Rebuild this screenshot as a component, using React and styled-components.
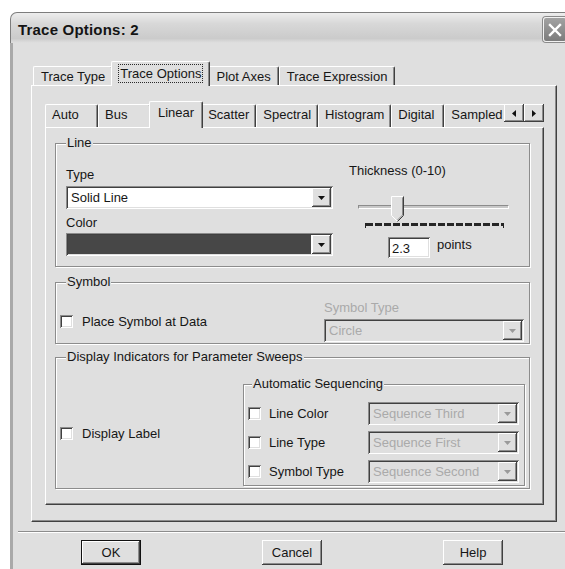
import React from 'react';
import styled, { createGlobalStyle, css } from 'styled-components';

const FACE = '#dfdfdf';
const SHADOW = '#8c8c8c';
const DARK = '#404040';
const TEXT = '#161616';
const GRAYTEXT = '#aaaaaa';

const GlobalStyle = createGlobalStyle`
  *, *::before, *::after { box-sizing: border-box; }
  html, body { margin: 0; padding: 0; background: #ffffff; overflow: hidden; }
  body {
    font-family: "Liberation Sans", Arial, sans-serif;
    font-size: 13px;
    line-height: 15px;
    color: ${TEXT};
  }
`;

const raised = css`
  box-shadow: inset -1px -1px ${DARK}, inset 1px 1px #ffffff,
    inset -2px -2px ${SHADOW}, inset 2px 2px ${FACE};
`;

const sunken = css`
  box-shadow: inset 1px 1px ${SHADOW}, inset -1px -1px #ffffff,
    inset 2px 2px ${DARK}, inset -2px -2px ${FACE};
`;

const Screen = styled.div`
  width: 565px;
  height: 569px;
  overflow: hidden;
  padding: 12px 0 0 10px;
`;

const Window = styled.div`
  width: 568px;
`;

const TitleBar = styled.div`
  display: flex;
  justify-content: space-between;
  align-items: flex-start;
  height: 31px;
  padding: 0 10px 0 7px;
  border: 1px solid #7d7d7d;
  border-bottom: 0;
  border-radius: 7px 7px 0 0;
  background: linear-gradient(#ededed 0%, #d8d8d8 35%, #cbcbcb 85%, #e0e0e0 100%);
`;

const Title = styled.span`
  margin-top: 8px;
  font-size: 15px;
  font-weight: bold;
  line-height: 17px;
  letter-spacing: 0.2px;
  color: #141414;
`;

const CloseButton = styled.span`
  display: flex;
  align-items: center;
  justify-content: center;
  width: 24px;
  height: 25px;
  margin-top: 4px;
  border: 1px solid #f2f2f2;
  border-radius: 3px;
  background: linear-gradient(#a2a2a2, #7c7c7c);
  box-shadow: 0 0 0 1px #8a8a8a;
`;

const Frame = styled.div`
  background: ${FACE};
  border-left: 3px solid #a9a9a9;
  border-right: 3px solid #a9a9a9;
  padding: 18px 5px 30px;
`;

const TabControl = styled.div`
  margin: ${p => p.$margin};
`;

const TabRow = styled.div`
  position: relative;
  z-index: 1;
  display: flex;
  height: ${p => p.$h}px;
`;

const TabList = styled.div`
  flex: 1;
  min-width: 0;
  display: flex;
  align-items: flex-end;
  align-self: flex-start;
  height: ${p => p.$h + 1}px;
  padding-left: ${p => p.$inset}px;
  overflow: hidden;
`;

const Tab = styled.div`
  position: relative;
  flex: none;
  display: flex;
  align-items: flex-start;
  min-width: ${p => p.$min}px;
  height: ${p => (p.$active ? p.$h + 1 : p.$tabH)}px;
  padding: ${p => (p.$active ? `${p.$activeTop}px 8px 0` : `${p.$top}px ${p.$padX}px 0`)};
  margin: ${p => (p.$active ? '0 -2px' : '0 0 1px')};
  z-index: ${p => (p.$active ? 1 : 0)};
  background: ${FACE};
  border-top: 1px solid #ffffff;
  border-left: 1px solid #ffffff;
  border-right: 1px solid ${DARK};
  border-radius: 2px 2px 0 0;
  box-shadow: inset -1px 0 ${SHADOW};
  white-space: nowrap;
`;

const FocusText = styled.span`
  outline: 1px dotted #2a2a2a;
  outline-offset: 1px;
`;

const ScrollPair = styled.div`
  flex: none;
  display: flex;
  margin-top: 3px;
`;

const ScrollButton = styled.span`
  display: flex;
  align-items: center;
  justify-content: center;
  width: 20px;
  height: 18px;
  background: ${FACE};
  ${raised};
`;

const Panel = styled.div`
  display: flex;
  flex-direction: column;
  padding: ${p => p.$pad};
  border-top: 1px solid #ffffff;
  border-left: 1px solid #ffffff;
  border-right: 1px solid ${DARK};
  border-bottom: 1px solid ${DARK};
  box-shadow: inset -1px -1px ${SHADOW};
`;

const Group = styled.div`
  position: relative;
  display: flex;
  align-items: ${p => p.$align || 'flex-start'};
  height: ${p => (p.$h ? `${p.$h}px` : 'auto')};
  width: ${p => (p.$w ? `${p.$w}px` : 'auto')};
  margin-top: ${p => p.$mt || 0}px;
  margin-left: ${p => (p.$push ? 'auto' : '0')};
  flex: none;
  padding: ${p => p.$pad};
  border: 1px solid ${SHADOW};
  box-shadow: inset 1px 1px #ffffff, 1px 1px #ffffff;
`;

const Caption = styled.span`
  position: absolute;
  top: -9px;
  left: ${p => p.$x || 10}px;
  padding: 0 1px;
  background: ${FACE};
  white-space: nowrap;
`;

const Column = styled.div`
  display: flex;
  flex-direction: column;
  width: ${p => (p.$w ? `${p.$w}px` : 'auto')};
  margin-left: ${p => p.$ml || 0};
  margin-top: ${p => p.$mt || 0}px;
`;

const FieldLabel = styled.span`
  margin-top: ${p => p.$mt || 0}px;
  color: ${p => (p.$disabled ? GRAYTEXT : TEXT)};
  white-space: nowrap;
`;

const Combo = styled.div`
  display: flex;
  align-items: stretch;
  width: ${p => (p.$w ? `${p.$w}px` : '100%')};
  height: 23px;
  margin-top: ${p => p.$mt || 0}px;
  padding: 2px;
  background: ${p => (p.$disabled ? FACE : '#ffffff')};
  ${sunken};
`;

const ComboText = styled.span`
  flex: 1;
  min-width: 0;
  padding: 2px 3px 0;
  color: ${p => (p.$disabled ? GRAYTEXT : TEXT)};
  white-space: nowrap;
  overflow: hidden;
`;

const Swatch = styled.span`
  flex: 1;
  margin-right: 1px;
  background: #474747;
`;

const DropButton = styled.span`
  flex: none;
  display: flex;
  align-items: center;
  justify-content: center;
  width: 19px;
  background: ${FACE};
  ${raised};
`;

const Slider = styled.div`
  position: relative;
  width: 151px;
  height: 32px;
  margin: 18px 0 0 9px;
`;

const Track = styled.div`
  margin-top: 9px;
  height: 4px;
  border-top: 1px solid ${SHADOW};
  border-left: 1px solid ${SHADOW};
  border-bottom: 1px solid #ffffff;
  border-right: 1px solid #ffffff;
  background: #c8c8c8;
`;

const Thumb = styled.svg`
  position: absolute;
  left: 33px;
  top: 0;
`;

const Ticks = styled.div`
  width: 139px;
  height: 5px;
  margin: 14px 0 0 7px;
  border-left: 1px solid #222;
  border-right: 1px solid #222;
  background: repeating-linear-gradient(90deg, #262626 0 7px, transparent 7px 9px) 0 0 / 100% 3px no-repeat;
`;

const EditRow = styled.div`
  display: flex;
  align-items: flex-start;
  gap: 7px;
  margin: 9px 0 0 39px;
`;

const EditBox = styled.span`
  width: 42px;
  height: 21px;
  padding: 4px 0 0 4px;
  background: #ffffff;
  ${sunken};
`;

const CheckLine = styled.div`
  display: flex;
  align-items: center;
  gap: 9px;
  margin: ${p => p.$m || 0};
`;

const CheckBox = styled.span`
  flex: none;
  width: 13px;
  height: 13px;
  background: #ffffff;
  ${sunken};
`;

const SeqGrid = styled.div`
  display: grid;
  grid-template-columns: 13px 91px 151px;
  column-gap: 8px;
  row-gap: 6px;
  align-items: center;
`;

const Separator = styled.div`
  height: 2px;
  margin-top: 9px;
  border-top: 1px solid ${SHADOW};
  border-bottom: 1px solid #ffffff;
`;

const ButtonRow = styled.div`
  display: flex;
  gap: 121px;
  margin-top: 7px;
  padding-left: 63px;
`;

const PushButton = styled.button`
  width: 60px;
  height: 25px;
  padding: 0;
  border: 0;
  font: inherit;
  color: ${TEXT};
  background: ${FACE};
  ${raised};
  ${p =>
    p.$default &&
    css`
      box-shadow: inset 0 0 0 1px #111111, inset -2px -2px ${DARK}, inset 2px 2px #ffffff,
        inset -3px -3px ${SHADOW};
    `}
`;

const DownArrow = ({ color = '#111' }) => (
  <svg width="7" height="4" viewBox="0 0 7 4">
    <polygon points="0,0 7,0 3.5,4" fill={color} />
  </svg>
);

const SideArrow = ({ dir }) => (
  <svg width="4" height="7" viewBox="0 0 4 7">
    <polygon points={dir === 'left' ? '4,0 4,7 0,3.5' : '0,0 0,7 4,3.5'} fill="#111" />
  </svg>
);

const ComboBox = ({ value, swatch, disabled, w, mt }) => (
  <Combo $disabled={disabled} $w={w} $mt={mt}>
    {swatch ? <Swatch /> : <ComboText $disabled={disabled}>{value}</ComboText>}
    <DropButton>
      <DownArrow color={disabled ? '#9a9a9a' : '#111'} />
    </DropButton>
  </Combo>
);

const OUTER = { h: 24, tabH: 19, top: 2, activeTop: 4, padX: 7 };
const INNER = { h: 26, tabH: 23, top: 2, activeTop: 3, padX: 6 };

const TabStrip = ({ tabs, active, size, inset, focus, children }) => (
  <TabRow $h={size.h}>
    <TabList $h={size.h} $inset={inset}>
      {tabs.map(t => (
        <Tab
          key={t}
          $active={t === active}
          $h={size.h}
          $tabH={size.tabH}
          $top={size.top}
          $activeTop={size.activeTop}
          $padX={size.padX}
          $min={53}
        >
          {t === active && focus ? <FocusText>{t}</FocusText> : t}
        </Tab>
      ))}
    </TabList>
    {children}
  </TabRow>
);

const outerTabs = ['Trace Type', 'Trace Options', 'Plot Axes', 'Trace Expression'];
const innerTabs = ['Auto', 'Bus', 'Linear', 'Scatter', 'Spectral', 'Histogram', 'Digital', 'Sampled'];

const sequencing = [
  { label: 'Line Color', value: 'Sequence Third' },
  { label: 'Line Type', value: 'Sequence First' },
  { label: 'Symbol Type', value: 'Sequence Second' },
];

export default function App() {
  return (
    <Screen>
      <GlobalStyle />
      <Window>
        <TitleBar>
          <Title>Trace Options: 2</Title>
          <CloseButton>
            <svg width="14" height="14" viewBox="0 0 14 14">
              <path d="M2 2 L12 12 M12 2 L2 12" stroke="#ffffff" strokeWidth="2.4" strokeLinecap="square" />
            </svg>
          </CloseButton>
        </TitleBar>

        <Frame>
          <TabControl $margin="0 13px">
            <TabStrip tabs={outerTabs} active="Trace Options" size={OUTER} inset={2} focus />
            <Panel $pad="15px 12px 16px 13px">
              <TabControl $margin="0">
                <TabStrip tabs={innerTabs} active="Linear" size={INNER} inset={0}>
                  <ScrollPair>
                    <ScrollButton>
                      <SideArrow dir="left" />
                    </ScrollButton>
                    <ScrollButton>
                      <SideArrow dir="right" />
                    </ScrollButton>
                  </ScrollPair>
                </TabStrip>

                <Panel $pad="15px 13px 15px 9px">
                  <Group $h={124} $pad="19px 0 0 10px">
                    <Caption>Line</Caption>
                    <Column $w={267} $mt={4}>
                      <FieldLabel>Type</FieldLabel>
                      <ComboBox value="Solid Line" mt={4} />
                      <FieldLabel $mt={6}>Color</FieldLabel>
                      <ComboBox swatch mt={3} />
                    </Column>
                    <Column $ml="16px">
                      <FieldLabel>Thickness (0-10)</FieldLabel>
                      <Slider>
                        <Track />
                        <Thumb width="13" height="27" viewBox="0 0 13 27">
                          <polygon points="0.5,0.5 12.5,0.5 12.5,19.5 6.5,25.5 0.5,19.5" fill={FACE} />
                          <polyline points="0.5,19.5 0.5,0.5 12,0.5" fill="none" stroke="#ffffff" />
                          <polyline points="0.5,19.5 6.5,25.5" fill="none" stroke="#ffffff" />
                          <polyline points="12.5,0.5 12.5,19.5 6.5,25.5" fill="none" stroke={DARK} />
                          <polyline points="11.5,1.5 11.5,19 6.5,24" fill="none" stroke={SHADOW} />
                        </Thumb>
                        <Ticks />
                      </Slider>
                      <EditRow>
                        <EditBox>2.3</EditBox>
                        <span>points</span>
                      </EditRow>
                    </Column>
                  </Group>

                  <Group $h={62} $mt={15} $align="flex-end" $pad="16px 5px 1px 4px">
                    <Caption>Symbol</Caption>
                    <CheckLine $m="0 0 13px 0">
                      <CheckBox />
                      <span>Place Symbol at Data</span>
                    </CheckLine>
                    <Column $w={200} $ml="auto">
                      <FieldLabel $disabled>Symbol Type</FieldLabel>
                      <ComboBox value="Circle" disabled mt={4} />
                    </Column>
                  </Group>

                  <Group $h={132} $mt={13} $pad="26px 4px 0 4px">
                    <Caption>Display Indicators for Parameter Sweeps</Caption>
                    <CheckLine $m="42px 0 0 0">
                      <CheckBox />
                      <span>Display Label</span>
                    </CheckLine>
                    <Group $w={282} $h={102} $pad="17px 5px 0 4px" $push>
                      <Caption $x={8}>Automatic Sequencing</Caption>
                      <SeqGrid>
                        {sequencing.map(s => (
                          <React.Fragment key={s.label}>
                            <CheckBox />
                            <span>{s.label}</span>
                            <ComboBox value={s.value} disabled />
                          </React.Fragment>
                        ))}
                      </SeqGrid>
                    </Group>
                  </Group>
                </Panel>
              </TabControl>
            </Panel>
          </TabControl>

          <Separator />
          <ButtonRow>
            <PushButton $default>OK</PushButton>
            <PushButton>Cancel</PushButton>
            <PushButton>Help</PushButton>
          </ButtonRow>
        </Frame>
      </Window>
    </Screen>
  );
}
